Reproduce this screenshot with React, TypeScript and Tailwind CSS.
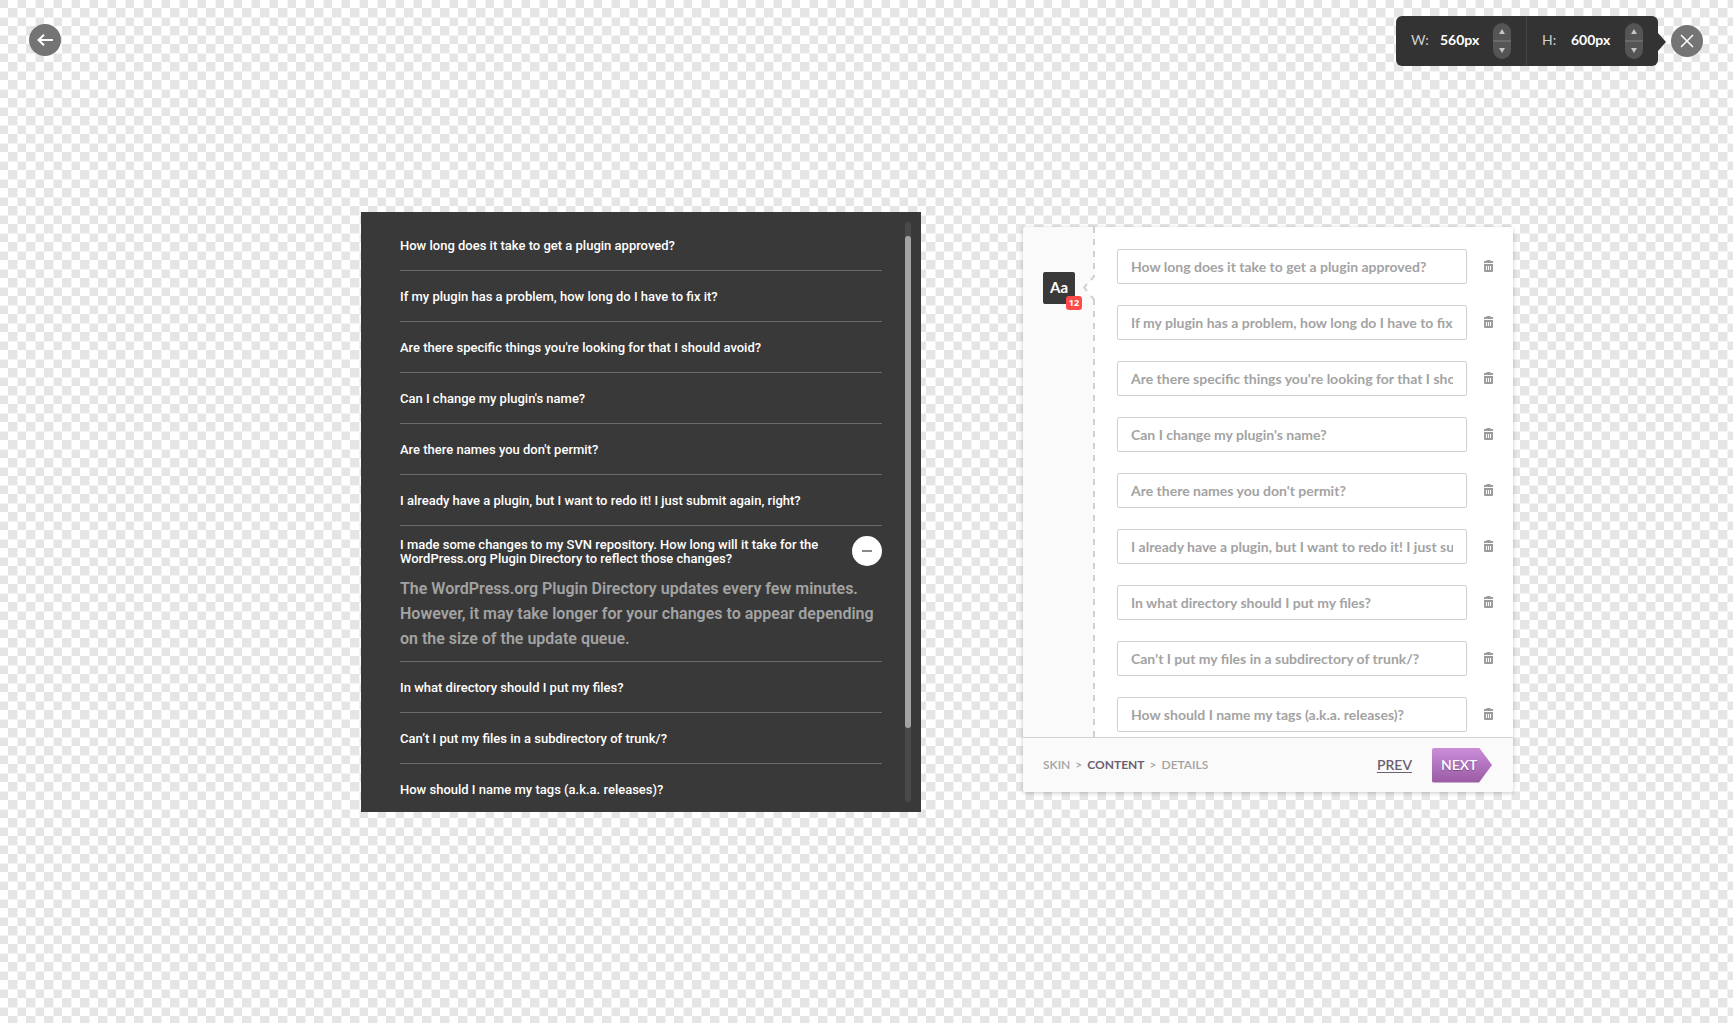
import React from "react";

type Faq = { question: string; answer?: string };

const FAQS: Faq[] = [
  { question: "How long does it take to get a plugin approved?" },
  { question: "If my plugin has a problem, how long do I have to fix it?" },
  { question: "Are there specific things you're looking for that I should avoid?" },
  { question: "Can I change my plugin's name?" },
  { question: "Are there names you don't permit?" },
  { question: "I already have a plugin, but I want to redo it! I just submit again, right?" },
  {
    question:
      "I made some changes to my SVN repository. How long will it take for the WordPress.org Plugin Directory to reflect those changes?",
    answer:
      "The WordPress.org Plugin Directory updates every few minutes. However, it may take longer for your changes to appear depending on the size of the update queue.",
  },
  { question: "In what directory should I put my files?" },
  { question: "Can’t I put my files in a subdirectory of trunk/?" },
  { question: "How should I name my tags (a.k.a. releases)?" },
];

const FIELDS = FAQS.filter((faq) => !faq.answer).map((faq) => faq.question);

function Spinner({ name }: { name: string }) {
  return (
    <div className="flex h-9 w-[18px] shrink-0 flex-col overflow-hidden rounded-full bg-[#555]">
      <button type="button" aria-label={`Increase ${name}`} className="flex h-[17px] items-center justify-center">
        <svg width="6" height="5" viewBox="0 0 6 5" className="fill-[#c4c4c4]">
          <path d="M3 0 6 5H0z" />
        </svg>
      </button>
      <span className="h-[2px] bg-[#6a6a6a]" />
      <button type="button" aria-label={`Decrease ${name}`} className="flex h-[17px] items-center justify-center">
        <svg width="6" height="5" viewBox="0 0 6 5" className="fill-[#c4c4c4]">
          <path d="M0 0H6L3 5z" />
        </svg>
      </button>
    </div>
  );
}

function SizeField({ label, name, value }: { label: string; name: string; value: string }) {
  return (
    <div className="flex w-[131px] items-center px-[15px]">
      <label htmlFor={name} className="w-[29px] shrink-0 pb-[3px] text-sm leading-5 text-[#cfcfcf]">
        {label}
      </label>
      <input
        id={name}
        defaultValue={value}
        className="w-0 min-w-0 flex-1 bg-transparent pb-[3px] text-sm leading-5 font-bold text-white outline-none"
      />
      <Spinner name={name} />
    </div>
  );
}

function TopBar() {
  return (
    <header className="flex items-start justify-between pt-4 pr-[30px] pl-[29px]">
      <button
        type="button"
        aria-label="Back"
        className="mt-2 flex size-8 items-center justify-center rounded-full bg-[#747474]"
      >
        <svg width="16" height="12" viewBox="0 0 16 12" fill="none" stroke="#fff" strokeWidth="2">
          <path d="M16 6H1.500M7 .7 1.500 6 7 11.300" />
        </svg>
      </button>
      <div className="flex items-start">
        <div className="flex h-[50px] divide-x divide-[#474747] rounded-md bg-[#333]">
          <SizeField label="W:" name="width" value="560px" />
          <SizeField label="H:" name="height" value="600px" />
        </div>
        <svg width="8" height="18" viewBox="0 0 8 18" className="mt-[17px] fill-[#333]">
          <path d="M0 0 8 9 0 18z" />
        </svg>
        <button
          type="button"
          aria-label="Close"
          className="mt-[9px] ml-[5px] flex size-8 items-center justify-center rounded-full bg-[#747474]"
        >
          <svg width="14" height="14" viewBox="0 0 14 14" fill="none" stroke="#fff" strokeWidth="1.500">
            <path d="M1 1 13 13M13 1 1 13" />
          </svg>
        </button>
      </div>
    </header>
  );
}

function FaqItem({ faq }: { faq: Faq }) {
  if (!faq.answer) {
    return (
      <li className="border-b border-[#6b6b6b]">
        <button type="button" className="flex h-[50px] w-full items-center pt-[2px] text-left text-white">
          {faq.question}
        </button>
      </li>
    );
  }
  return (
    <li className="border-b border-[#6b6b6b] pt-[10px] pb-[10px]">
      <div className="flex items-start justify-between">
        <p className="w-[440px] pt-[2px] leading-[14px] text-white">{faq.question}</p>
        <button
          type="button"
          aria-label="Collapse answer"
          className="flex size-[30px] shrink-0 items-center justify-center rounded-full bg-white"
        >
          <span className="h-[2px] w-[10px] bg-[#888]" />
        </button>
      </div>
      <p className="mt-[10px] text-base leading-[25px] font-semibold text-[#a3a3a3]">{faq.answer}</p>
    </li>
  );
}

function FaqPreview() {
  return (
    <section
      aria-label="Preview"
      className="flex h-[600px] w-[560px] shrink-0 justify-between overflow-hidden bg-[#393939] pr-[10px] pl-[39px] font-['Roboto',sans-serif] text-[13px] font-medium"
    >
      <ul className="w-[482px] pt-2">
        {FAQS.map((faq) => (
          <FaqItem key={faq.question} faq={faq} />
        ))}
      </ul>
      <div className="my-[10px] w-[6px] rounded-full bg-[#4a4a4a] pt-[14px]">
        <div className="h-[492px] rounded-full bg-[#a4a4a4]" />
      </div>
    </section>
  );
}

function TrashIcon() {
  return (
    <svg width="9" height="13" viewBox="0 0 9 13" className="fill-[#9b9b9b]">
      <path d="M2.500 0H6.500V1H9V3H0V1H2.500z" />
      <path
        fillRule="evenodd"
        d="M0 4H9V10.500Q9 12 7.500 12H1.500Q0 12 0 10.500zM2 6V10H3V6zM4 6V10H5V6zM6 6V10H7V6z"
      />
    </svg>
  );
}

function Editor() {
  return (
    <section
      aria-label="Editor"
      className="mb-[5px] w-[490px] shrink-0 rounded-[3px] bg-white font-['Lato',sans-serif] shadow-[0_1px_4px_rgba(0,0,0,0.22)]"
    >
      <div className="flex h-[510px] overflow-hidden">
        <aside className="relative w-[70px] shrink-0 rounded-tl-[3px] bg-[#fafafa] pt-[45px] pl-5">
          <button
            type="button"
            className="relative flex size-8 items-center justify-center rounded-[2px] bg-[#393939] pb-[2px] text-[15px] leading-5 font-bold text-white"
          >
            Aa
            <span className="absolute top-6 left-[23px] flex h-[14px] w-4 items-center justify-center rounded-[3px] bg-[#ff4a4a] font-['Open_Sans',sans-serif] text-[9px] leading-3 font-bold">
              12
            </span>
          </button>
          <svg
            width="12"
            height="32"
            viewBox="0 0 12 32"
            fill="none"
            stroke="#d0d0d0"
            strokeWidth="2"
            className="absolute top-[45px] left-[60px] z-10"
          >
            <path d="M12 3 1 16 12 29z" fill="#fff" stroke="none" />
            <path d="M11 3V4.500L8 8M4 12 1 15.500 4 19M8 24 11 27.500V32" />
          </svg>
        </aside>
        <div className="w-[2px] shrink-0 bg-[#fafafa] bg-[linear-gradient(#d0d0d0_6px,transparent_6px)] bg-[length:2px_12px]" />
        <form className="flex flex-1 flex-col gap-[21px] pt-[22px] pr-5 pl-[22px]">
          {FIELDS.map((text, i) => (
            <div key={text} className="flex items-center justify-between">
              <input
                aria-label={`Question ${i + 1}`}
                defaultValue={text}
                className="h-[35px] w-[350px] rounded-[2px] border border-[#d0d0d0] bg-white px-[13px] text-sm font-bold text-[#a3a3a3] outline-none"
              />
              <button type="button" aria-label={`Delete question ${i + 1}`}>
                <TrashIcon />
              </button>
            </div>
          ))}
        </form>
      </div>
      <footer className="flex h-[55px] items-center justify-between rounded-b-[3px] border-t border-[#d3d3d3] bg-[#fafafa] pr-[21px] pl-5">
        <nav className="flex gap-[5px] text-xs font-semibold text-[#a3a3a3]">
          <a href="#skin">SKIN</a>
          <span>&gt;</span>
          <a href="#content" className="font-bold text-[#6b5f70]">
            CONTENT
          </a>
          <span>&gt;</span>
          <a href="#details">DETAILS</a>
        </nav>
        <div className="flex items-center gap-5 text-sm leading-5 font-semibold">
          <button type="button" className="text-[#6b5f70] underline underline-offset-2">
            PREV
          </button>
          <button
            type="button"
            className="h-[35px] w-[60px] rounded-l-[2px] bg-linear-to-b from-[#ca8dd8] to-[#9a5aa4] pl-[9px] text-left text-white [clip-path:polygon(0_0,47px_0,100%_50%,47px_100%,0_100%)] [text-shadow:0_1px_1px_rgba(0,0,0,0.3)]"
          >
            NEXT
          </button>
        </div>
      </footer>
    </section>
  );
}

export default function App() {
  return (
    <div className="flex min-h-screen flex-col bg-white bg-[linear-gradient(to_right,transparent_17px,#f4f4f4_17px),linear-gradient(to_bottom,transparent_17px,#f4f4f4_17px),conic-gradient(at_8px_8px,#fff_25%,#e5e5e5_25%_50%,#fff_50%_75%,#e5e5e5_75%)] bg-[length:18px_18px] font-['Lato',sans-serif]">
      <TopBar />
      <main className="flex flex-1 items-center justify-center gap-[102px] pb-[65px] pl-[141px]">
        <FaqPreview />
        <Editor />
      </main>
    </div>
  );
}
